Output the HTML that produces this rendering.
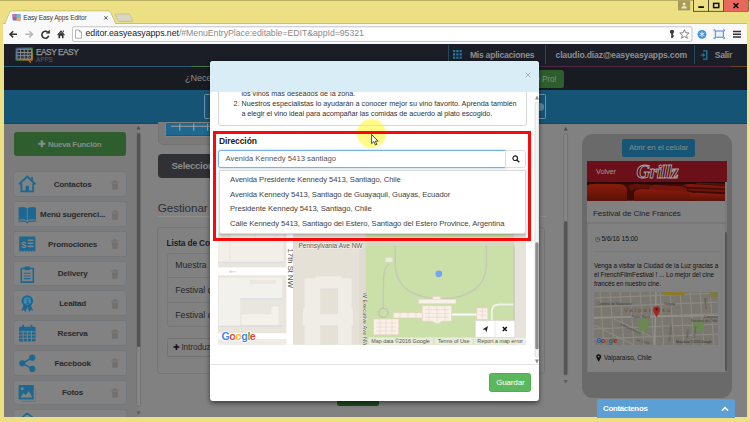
<!DOCTYPE html>
<html><head><meta charset="utf-8"><title>Easy Easy Apps Editor</title>
<style>
*{box-sizing:border-box;margin:0;padding:0}
html,body{width:750px;height:422px;overflow:hidden}
body{background:#ede084;font-family:"Liberation Sans",sans-serif;position:relative;color:#333}
.abs{position:absolute}
.t{position:absolute;white-space:nowrap;line-height:1}
#page{position:absolute;left:3.5px;top:44.1px;width:743.4px;height:373.4px;background:#818181;overflow:hidden}
#page .abs, #page .t{ }
.item{position:absolute;left:9px;width:114.8px;height:25.7px;background:#828282;border:1px solid #72787c;border-radius:3px}
.item .lbl{position:absolute;left:25.6px;width:67px;text-align:center;top:8.6px;font-size:8.1px;line-height:1;font-weight:bold;color:#2a2a2a;white-space:nowrap;letter-spacing:-0.2px}
.item svg.ic{position:absolute;left:4px;top:3px;width:18.6px;height:18.6px}
.item svg.tr{position:absolute;left:97.2px;top:7.5px;width:8px;height:10px}
</style></head><body>
<!-- CHROME -->
<svg class="abs" style="left:0;top:0" width="750" height="45" viewBox="0 0 750 45">
  <rect x="0" y="0" width="750" height=".9" fill="#b3a95f"/><path d="M4.6 24.4 L9.6 12.4 Q10.3 10.9 12.3 10.9 L108 10.9 Q110 10.9 110.7 12.4 L116 24.4 Z" fill="#f9f9f9" stroke="#b5ab62" stroke-width=".6"/>
  <path d="M115.5 14 L128.5 14 Q129.8 14 130.3 15.2 L132.5 20.2 Q133 21.4 131.6 21.4 L119.4 21.4 Q118.2 21.4 117.7 20.2 L115.3 15 Q114.9 14 115.5 14Z" fill="#d8d7c2" stroke="#b9b07a" stroke-width=".6"/>
  <rect x="3.2" y="23.8" width="743.7" height="20.6" rx="1.2" fill="#f9f9f9"/>
  <rect x="3.2" y="23" width="743.7" height=".9" fill="#c6bb6c"/>
  <rect x="5.6" y="22.6" width="109.6" height="1.8" fill="#f9f9f9"/>
  <rect x="72.5" y="26.8" width="619.5" height="14.6" rx="1.5" fill="#fff" stroke="#b4b4b4" stroke-width=".8"/>
  <!-- window buttons -->
  <rect x="678" y=".6" width="12.2" height="9.8" fill="#a69c58"/>
  <circle cx="684.1" cy="4" r="1.5" fill="#ece6b8"/><path d="M681.4 8.6 Q681.4 5.9 684.1 5.9 Q686.8 5.9 686.8 8.6Z" fill="#ece6b8"/>
  <rect x="693.5" y="-1" width="15" height="12.3" fill="#ede084" stroke="#3a3620" stroke-width=".8"/>
  <rect x="708.5" y="-1" width="15" height="12.3" fill="#ede084" stroke="#3a3620" stroke-width=".8"/>
  <rect x="723.5" y="-1" width="25" height="12.3" fill="#e9685d" stroke="#3a3620" stroke-width=".5"/>
  <rect x="698.3" y="6.2" width="5.6" height="1.8" fill="#111"/>
  <rect x="713.6" y="3.4" width="5.2" height="4.2" fill="none" stroke="#111" stroke-width="1.5"/>
  <path d="M733.5 3.3 L738.3 8 M738.3 3.3 L733.5 8" stroke="#111" stroke-width="1.6"/>
  <!-- favicon -->
  <rect x="12.5" y="14" width="8" height="6.5" rx="1" fill="#7a6fd0"/>
  <rect x="12.5" y="14" width="4" height="3" fill="#e06a9a"/><rect x="16.5" y="14" width="4" height="3" fill="#5fc0d8"/><rect x="16.5" y="17.2" width="4" height="3.3" fill="#e8b04a"/>
  <path d="M18 20.4 L20.4 22 L20 20.4Z" fill="#e8934a"/>
  <!-- tab close -->
  <path d="M104.2 16.2 L107.6 19.6 M107.6 16.2 L104.2 19.6" stroke="#444" stroke-width=".9"/>
  <!-- nav icons -->
  <path d="M10 34.3 H17 M13.2 31.2 L10 34.3 L13.2 37.4" stroke="#333" stroke-width="1.5" fill="none"/>
  <path d="M25.5 34.3 H32.5 M29.3 31.2 L32.5 34.3 L29.3 37.4" stroke="#b8b8b8" stroke-width="1.5" fill="none"/>
  <path d="M47.6 32 A3.5 3.5 0 1 0 48.7 35.8" stroke="#2e2e2e" stroke-width="1.6" fill="none"/><path d="M45.8 33.4 L49.9 29.8 L49.9 33.6Z" fill="#2e2e2e"/>
  <path d="M57.2 34.7 L61 30.3 L64.8 34.7 L64.1 35.4 L61 31.9 L57.9 35.4Z M58.5 35 L61 32.4 L63.5 35 V38.2 H61.9 V35.8 H60.1 V38.2 H58.5Z M62.7 30.5 H63.8 V32.6 L62.7 31.4Z" fill="#2e2e2e"/>
  <path d="M75.6 30 H79.4 L81.4 32 V38.2 H75.6Z M79.4 30 V32 H81.4" fill="#fff" stroke="#8a8a8a" stroke-width=".7"/>
  <!-- right icons -->
  <circle cx="672" cy="31.8" r="2.1" fill="#3a3a3a"/><rect x="671.2" y="32.5" width="1.7" height="5.6" fill="#3a3a3a"/><rect x="672" y="35.4" width="2" height="1.2" fill="#3a3a3a"/>
  <path d="M684.4 29.7 L685.7 32.7 L689 33 L686.5 35.1 L687.3 38.3 L684.4 36.6 L681.5 38.3 L682.3 35.1 L679.8 33 L683.1 32.7Z" fill="#fff" stroke="#555" stroke-width=".7"/>
  <circle cx="702" cy="34.3" r="4.4" fill="#3f8fe0"/><path d="M702 31.5 V37.1 M699.6 32.9 L704.4 35.7 M704.4 32.9 L699.6 35.7" stroke="#dfeeff" stroke-width="1"/>
  <rect x="715.3" y="31" width="8" height="6.2" fill="#eaf2fb" stroke="#4a86c8" stroke-width="1"/>
  <path d="M714 31.3 V29.8 H715.6 M723 29.8 H724.6 V31.3 M714 37 V38.6 H715.6 M723 38.6 H724.6 V37" stroke="#4a86c8" stroke-width=".8" fill="none"/>
  <path d="M733 31.6 H741 M733 34.3 H741 M733 37 H741" stroke="#333" stroke-width="1.5"/>
</svg>
<div class="t" style="left:23.2px;top:14.8px;font-size:6.5px;color:#3a3a3a;letter-spacing:-0.12px">Easy Easy Apps Editor</div>
<div class="t" id="url" style="left:85.5px;top:29.4px;font-size:8.78px;color:#222;letter-spacing:-0.05px">editor.easyeasyapps.net<span style="color:#8a8a8a">/#MenuEntryPlace:editable=EDIT&amp;appId=95321</span></div>

<!-- PAGE -->
<div id="page">
  <!-- header -->
  <div class="abs" style="left:0;top:0;width:744px;height:22.4px;background:#1b1e26"></div>
  <div class="abs" style="left:0;top:22px;width:744px;height:1.5px;background:linear-gradient(90deg,#285a78 0,#285a78 187px,#47764a 188px,#47764a 372px,#532844 373px,#532844 726px,#6e4426 727px)"></div>
  <div class="abs" style="left:0;top:23.4px;width:744px;height:23px;background:#181b22"></div>
  <div class="abs" style="left:0;top:46px;width:744px;height:33.6px;background:#165475"></div>
  <div class="abs" style="left:0;top:78.6px;width:744px;height:1.1px;background:#134862"></div>
  <!-- logo -->
  <svg class="abs" style="left:11.5px;top:2.5px" width="19" height="17" viewBox="0 0 19 17">
    <defs><linearGradient id="lg" x1="0" y1="0" x2="1" y2="1"><stop offset="0" stop-color="#53307e"/><stop offset=".3" stop-color="#1d6c8c"/><stop offset=".6" stop-color="#4f7a2a"/><stop offset=".8" stop-color="#98801c"/><stop offset="1" stop-color="#a8601c"/></linearGradient></defs>
    <rect x=".4" y=".4" width="17.6" height="13.4" rx="1.4" fill="url(#lg)"/>
    <path d="M12.6 13.4 L16.2 16.6 L15.8 13.4Z" fill="#a8681f"/>
    <rect x="2" y="2.2" width="14.4" height="9.8" fill="#25252f"/>
    <path d="M2 2.2 H16.4 V12 H2Z M5.6 2.2 V12 M9.2 2.2 V12 M12.8 2.2 V12 M2 5.5 H16.4 M2 8.7 H16.4" stroke="#8d8d90" stroke-width="1" fill="none"/>
    <g><circle cx="3.8" cy="7.1" r=".6" fill="#3a4aa0"/><circle cx="7.4" cy="7.1" r=".6" fill="#2a7aa0"/><circle cx="11" cy="7.1" r=".6" fill="#2a8a5a"/><circle cx="14.6" cy="7.1" r=".6" fill="#8a8a2a"/><circle cx="3.8" cy="10.3" r=".6" fill="#5a3a90"/><circle cx="7.4" cy="10.3" r=".6" fill="#8a2a6a"/><circle cx="11" cy="10.3" r=".6" fill="#a02a2a"/><circle cx="14.6" cy="10.3" r=".6" fill="#a0702a"/></g>
  </svg>
  <div class="t" style="left:32.4px;top:3.6px;font-size:8.4px;color:#9c9c9c;letter-spacing:-0.5px;-webkit-text-stroke:.25px #9c9c9c">EASY EASY</div>
  <div class="t" style="left:32.6px;top:12.6px;font-size:6.4px;color:#5a6068;letter-spacing:-0.1px">APPS</div>
  <!-- header right -->
  <div class="abs" style="left:444px;top:1px;width:1px;height:19px;background:#1d4c63"></div>
  <div class="abs" style="left:541px;top:1px;width:1px;height:19px;background:#1d4c63"></div>
  <div class="abs" style="left:690px;top:1px;width:1px;height:19px;background:#1d4c63"></div>
  <svg class="abs" style="left:449.5px;top:6.3px" width="9" height="9" viewBox="0 0 9 9"><g fill="#1e7aa6"><rect x="0" y="0" width="2.2" height="2.2"/><rect x="3.3" y="0" width="2.2" height="2.2"/><rect x="6.6" y="0" width="2.2" height="2.2"/><rect x="0" y="3.3" width="2.2" height="2.2"/><rect x="3.3" y="3.3" width="2.2" height="2.2"/><rect x="6.6" y="3.3" width="2.2" height="2.2"/><rect x="0" y="6.6" width="2.2" height="2.2"/><rect x="3.3" y="6.6" width="2.2" height="2.2"/><rect x="6.6" y="6.6" width="2.2" height="2.2"/></g></svg>
  <div class="t" id="misap" style="margin-top:.5px;left:466.4px;top:6.4px;font-size:8.6px;font-weight:bold;color:#8e8e8e;letter-spacing:-0.25px">Mis aplicaciones</div>
  <div class="t" id="email" style="margin-top:.5px;left:552px;top:6.4px;font-size:8.6px;font-weight:bold;color:#8e8e8e;letter-spacing:-0.15px">claudio.diaz@easyeasyapps.com</div>
  <svg class="abs" style="left:696.5px;top:5.6px" width="8" height="10" viewBox="0 0 8 10"><path d="M3 .8 H6.8 V9.2 H3" stroke="#1e7aa6" stroke-width="1.3" fill="none"/><path d="M.5 5 H4.2 M2.8 3.4 L4.4 5 L2.8 6.6" stroke="#1e7aa6" stroke-width="1.1" fill="none"/></svg>
  <div class="t" id="salir" style="margin-top:.5px;left:711.2px;top:6.4px;font-size:8.6px;font-weight:bold;color:#8e8e8e;letter-spacing:-0.25px">Salir</div>
  <!-- dark band -->
  <div class="t" style="left:181.4px;top:30.4px;font-size:9.1px;color:#8e8e8e">¿Necesita ayuda?</div>
  <div class="abs" style="left:500px;top:25.8px;width:60.2px;height:18.4px;background:#2e5d2e;border-radius:2.5px"></div>
  <div class="t" style="left:509px;top:30.6px;font-size:8.3px;color:#7f8c7f;letter-spacing:-0.2px">Hágase Pro!</div>
  <!-- blue band wizard box -->
  <div class="abs" style="left:200px;top:50px;width:342.5px;height:24.5px;border:1px solid #6d93a8;border-radius:1.5px"></div>
  <div class="abs" style="left:532px;top:59px;width:8px;height:8px;border-radius:50%;background:#5c8298"></div>

  <!-- sidebar -->
  <div class="abs" style="left:0;top:79.6px;width:134px;height:294px;background:#7b7b7b"></div>
  <div class="abs" style="left:10.3px;top:87.7px;width:112.6px;height:24.4px;background:#2e5d2e;border-radius:3px"></div>
  <div class="t" id="nueva" style="left:34.8px;top:96px;font-size:7.9px;font-weight:bold;color:#878d87;letter-spacing:-0.25px"><span style="font-size:9px;position:relative;top:.3px">✚</span> Nueva Función</div>

  <div class="item" style="top:127.40px"><svg class="ic" viewBox="0 0 18 18"><path d="M1 9 L9 1.5 L17 9 M3.3 8.2 V15.8 H14.7 V8.2 M13.6 2 V5.2" stroke="#1d6890" stroke-width="1.8" fill="none"/><rect x="7.4" y="10.5" width="3.2" height="5.3" fill="#1d6890"/></svg><div class="lbl">Contactos</div><svg class="tr" viewBox="0 0 8 10"><path d="M.3 1.6 H7.7 V2.8 H.3Z M2.8 .3 H5.2 V1.6 H2.8Z M.9 3.4 H7.1 L6.7 9.8 H1.3Z" fill="#717171"/></svg></div>
  <div class="item" style="top:157.15px"><svg class="ic" viewBox="0 0 18 18"><path d="M.6 2.5 Q5 1.2 8.6 3 V14.8 Q5 13.2 .6 14.4Z M17.4 2.5 Q13 1.2 9.4 3 V14.8 Q13 13.2 17.4 14.4Z" fill="#1d6890"/><path d="M.6 15.6 H7 L9 17.2 L11 15.6 H17.4" stroke="#1d6890" stroke-width="1" fill="none"/></svg><div class="lbl">Menú sugerenci...</div><svg class="tr" viewBox="0 0 8 10"><path d="M.3 1.6 H7.7 V2.8 H.3Z M2.8 .3 H5.2 V1.6 H2.8Z M.9 3.4 H7.1 L6.7 9.8 H1.3Z" fill="#717171"/></svg></div>
  <div class="item" style="top:186.90px"><svg class="ic" viewBox="0 0 18 18"><path d="M1.2 1.5 H16.8 V15 L15.5 16.3 L14.2 15 L12.9 16.3 L11.6 15 L10.3 16.3 L9 15 L7.7 16.3 L6.4 15 L5.1 16.3 L3.8 15 L2.5 16.3 L1.2 15Z" fill="#1d6890"/><text x="3" y="12.5" font-family="Liberation Sans, sans-serif" font-size="9.5" font-weight="bold" fill="#828282">$</text><path d="M9.5 5 H15 M9.5 8 H15 M9.5 11 H15" stroke="#828282" stroke-width="1.5"/></svg><div class="lbl">Promociones</div><svg class="tr" viewBox="0 0 8 10"><path d="M.3 1.6 H7.7 V2.8 H.3Z M2.8 .3 H5.2 V1.6 H2.8Z M.9 3.4 H7.1 L6.7 9.8 H1.3Z" fill="#717171"/></svg></div>
  <div class="item" style="top:216.65px"><svg class="ic" viewBox="0 0 18 18"><path d="M3.2 3.4 H14.8 V16.6 H3.2Z" stroke="#1d6890" stroke-width="1.5" fill="none"/><rect x="6.3" y="1.4" width="5.4" height="3.6" rx=".8" fill="#1d6890"/><path d="M5.8 8 H12.2 M5.8 10.6 H12.2 M5.8 13.2 H12.2" stroke="#1d6890" stroke-width="1.1"/></svg><div class="lbl">Delivery</div><svg class="tr" viewBox="0 0 8 10"><path d="M.3 1.6 H7.7 V2.8 H.3Z M2.8 .3 H5.2 V1.6 H2.8Z M.9 3.4 H7.1 L6.7 9.8 H1.3Z" fill="#717171"/></svg></div>
  <div class="item" style="top:246.40px"><svg class="ic" viewBox="0 0 18 18"><path d="M5.6 10.5 L3.2 16.4 L5.8 15.6 L7.2 17.6 L9 12.5 L10.8 17.6 L12.2 15.6 L14.8 16.4 L12.4 10.5Z" fill="#1d6890"/><circle cx="9" cy="6.8" r="5.6" fill="#1d6890"/><circle cx="9" cy="6.8" r="3.6" fill="#3d86ad"/><text x="7.4" y="9.2" font-family="Liberation Sans, sans-serif" font-size="6.5" font-weight="bold" fill="#1d6890">1</text></svg><div class="lbl">Lealtad</div><svg class="tr" viewBox="0 0 8 10"><path d="M.3 1.6 H7.7 V2.8 H.3Z M2.8 .3 H5.2 V1.6 H2.8Z M.9 3.4 H7.1 L6.7 9.8 H1.3Z" fill="#717171"/></svg></div>
  <div class="item" style="top:276.15px"><svg class="ic" viewBox="0 0 18 18"><rect x="1" y="2.6" width="16" height="14.4" rx="1" fill="#1d6890"/><rect x="4" y=".8" width="1.8" height="3.6" fill="#1d6890"/><rect x="12.2" y=".8" width="1.8" height="3.6" fill="#1d6890"/><path d="M1 7.6 H17 M1 10.7 H17 M1 13.8 H17 M5 6.4 V17 M9 6.4 V17 M13 6.4 V17" stroke="#828282" stroke-width=".9"/></svg><div class="lbl">Reserva</div><svg class="tr" viewBox="0 0 8 10"><path d="M.3 1.6 H7.7 V2.8 H.3Z M2.8 .3 H5.2 V1.6 H2.8Z M.9 3.4 H7.1 L6.7 9.8 H1.3Z" fill="#717171"/></svg></div>
  <div class="item" style="top:305.90px"><svg class="ic" viewBox="0 0 18 18"><path d="M13.6 3.6 L4.4 9 L13.6 14.4" stroke="#1d6890" stroke-width="1.5" fill="none"/><circle cx="13.8" cy="3.6" r="3" fill="#1d6890"/><circle cx="4.2" cy="9" r="3" fill="#1d6890"/><circle cx="13.8" cy="14.4" r="3" fill="#1d6890"/></svg><div class="lbl">Facebook</div><svg class="tr" viewBox="0 0 8 10"><path d="M.3 1.6 H7.7 V2.8 H.3Z M2.8 .3 H5.2 V1.6 H2.8Z M.9 3.4 H7.1 L6.7 9.8 H1.3Z" fill="#717171"/></svg></div>
  <div class="item" style="top:335.65px"><svg class="ic" viewBox="0 0 18 18"><path d="M3 16.8 H17.4 V4" stroke="#3d86ad" stroke-width="1.4" fill="none"/><rect x=".6" y="1" width="14.6" height="14" fill="#1d6890"/><path d="M2.2 13 L5.4 8.6 L7.4 10.8 L10.2 6.8 L13.8 13Z" fill="#828282"/><circle cx="4" cy="4.6" r="1.4" fill="#828282"/></svg><div class="lbl">Fotos</div><svg class="tr" viewBox="0 0 8 10"><path d="M.3 1.6 H7.7 V2.8 H.3Z M2.8 .3 H5.2 V1.6 H2.8Z M.9 3.4 H7.1 L6.7 9.8 H1.3Z" fill="#717171"/></svg></div>
  <div class="item" style="top:365.40px"><svg class="ic" viewBox="0 0 18 18"><path d="M4 4.2 L9 .2 L14 4.2" stroke="#1d6890" stroke-width="1.6" fill="none"/></svg></div>

  <!-- sidebar scrollbar -->
  <svg class="abs" style="left:131.6px;top:79px" width="8" height="296" viewBox="0 0 8 296">
    <path d="M3.6 3 L5.6 6.6 H1.6Z" fill="#4a4a4a"/>
    <rect x="1.7" y="9.5" width="3.8" height="274" rx="1.9" fill="#878787" stroke="#6d6d6d" stroke-width=".7"/>
    <rect x="2" y="10" width="3.2" height="214" rx="1.6" fill="#535353"/>
    <path d="M3.6 292 L5.6 288.4 H1.6Z" fill="#5a5a5a"/>
  </svg>

  <!-- center column -->
  <div class="abs" style="left:154.5px;top:78px;width:372px;height:22.6px;border:1px solid #747474;border-top:none;border-radius:0 0 5.5px 5.5px;background:#7a7a7a"></div>
  <div class="abs" style="left:162.5px;top:78.6px;width:360px;height:13.2px;background:#1f6891;box-shadow:0 0 0 .6px #8f8985"></div>
  <div class="abs" style="left:162.5px;top:90.8px;width:360px;height:1.2px;background:#195a80"></div>
  <svg class="abs" style="left:166px;top:78px" width="50" height="12" viewBox="0 0 50 12"><path d="M1 4.3 H50 M9.8 1.6 V8.8 M23.7 1.6 V8.8 M37.6 1.6 V8.8" stroke="#a59e99" stroke-width="1.1"/></svg>

  <div class="abs" style="left:154.8px;top:109.8px;width:120px;height:24px;background:#2f3134;border-radius:4px"></div>
  <div class="t" id="selec" style="left:168px;top:117.3px;font-size:9.6px;font-weight:bold;color:#8b8b8b;letter-spacing:-0.3px">Seleccionar</div>
  <div class="t" id="gest" style="left:154.3px;top:157.6px;font-size:11.7px;color:#2b2f34;letter-spacing:-0.1px">Gestionar contenido</div>
  <div class="abs" style="left:154.5px;top:171.5px;width:388px;height:1px;background:#8d8d8d"></div>
  <div class="abs" style="left:153.8px;top:183.4px;width:388px;height:146.4px;background:#818181;border:1px solid #757575;border-radius:3.5px"></div>
  <div class="t" style="left:163px;top:195px;font-size:8.4px;font-weight:bold;color:#1d1d1d;letter-spacing:-0.15px">Lista de Contenidos</div>
  <div class="abs" style="left:163.2px;top:208.6px;width:370px;height:74.2px;background:#818181;border:1px solid #777;border-radius:3px"></div>
  <div class="abs" style="left:163.2px;top:233.1px;width:370px;height:1px;background:#767676"></div>
  <div class="abs" style="left:163.2px;top:257.7px;width:370px;height:1px;background:#767676"></div>
  <div class="t" style="left:171.8px;top:217.2px;font-size:8.7px;color:#262626">Muestra</div>
  <div class="t" style="left:171.8px;top:241.9px;font-size:8.7px;color:#262626">Festival de</div>
  <div class="t" style="left:171.8px;top:266.5px;font-size:8.7px;color:#262626">Festival de</div>
  <div class="abs" style="left:163.2px;top:294.2px;width:90px;height:18.4px;background:#818181;border:1px solid #727272;border-radius:2.5px"></div>
  <div class="t" style="left:169.8px;top:298.6px;font-size:8.3px;color:#2a2a2a;letter-spacing:-.1px"><span style="font-size:8px;color:#111;margin-right:1.2px">✚</span>Introduzca</div>
  <div class="abs" style="left:333.5px;top:350px;width:42.3px;height:12.4px;background:#1f4a20;border-radius:0 0 2.5px 2.5px"></div>

  <!-- middle scrollbar -->
  <svg class="abs" style="left:558px;top:80px" width="8" height="262" viewBox="0 0 8 262">
    <path d="M3.7 3 L5.7 6.6 H1.7Z" fill="#4a4a4a"/>
    <rect x="1.8" y="9.5" width="3.8" height="242" rx="1.9" fill="#878787" stroke="#6d6d6d" stroke-width=".7"/>
    <rect x="2.1" y="97.1" width="3.2" height="153.8" rx="1.6" fill="#535353"/>
    <path d="M3.7 259.5 L5.7 255.9 H1.7Z" fill="#5a5a5a"/>
  </svg>

  <!-- phone -->
  <div class="abs" style="left:578.5px;top:90px;width:149.5px;height:263.6px;background:#6a6a6a;border-radius:11px"></div>
  <div class="abs" style="left:618.2px;top:94.5px;width:73.6px;height:18.4px;background:#165576;border-radius:2.5px"></div>
  <div class="t" id="abrir" style="left:625.4px;top:100.4px;font-size:7.85px;color:#868d90;letter-spacing:-0.1px">Abrir en el celular</div>
  <div class="abs" style="left:583.3px;top:116.5px;width:140.4px;height:211.6px;background:#787878"></div>
  <div class="abs" style="left:583.3px;top:116.5px;width:140.4px;height:22px;background:#6b1019"></div>
  <div class="t" style="left:592.5px;top:123.7px;font-size:7.3px;color:#a59b9c;letter-spacing:-0.05px">Volver</div>
  <svg class="abs" style="left:630px;top:116.5px" width="50" height="22" viewBox="0 0 50 22"><text id="grillz" x="2.6" y="16.6" font-family="Liberation Serif, serif" font-style="italic" font-weight="bold" font-size="18.6" letter-spacing="-.3" fill="#4a0a11" stroke="#a89e9f" stroke-width=".95">Grillz</text></svg>
  <!-- seats -->
  <svg class="abs" style="left:583.3px;top:138.3px" width="138" height="18.7" viewBox="0 0 138 18.4" preserveAspectRatio="none">
    <defs><linearGradient id="sg" x1="0" y1="0" x2="0" y2="1"><stop offset="0" stop-color="#8a1c0c"/><stop offset="1" stop-color="#5c1108"/></linearGradient></defs>
    <rect width="138" height="18.4" fill="#3c0a07"/>
    <rect width="138" height="1.6" fill="#220504"/>
    <path d="M0 18.4 V3.6 Q2 1.6 8 1.6 L32 2 Q39 2.6 40 7 V18.4Z" fill="url(#sg)"/>
    <path d="M62 4.8 Q64 2.6 70 2.8 L94 4.2 Q100 5 100.4 8.6 V12 L62 9Z" fill="#74160b"/>
    <path d="M96 3.4 Q99 1.6 105 2 L138 4 V6.4 L100 5Z" fill="#7a180c"/>
    <path d="M100 6.4 L138 7.6 V10 L102 8.6Z" fill="#6a140a"/>
    <path d="M110 .6 L138 1.8 V3 L108 1.8Z" fill="#5e1209"/>
    <path d="M47 18.4 V10.4 Q48 6.6 56 6.8 L100 9.4 Q108.4 10.2 109 14 V18.4Z" fill="url(#sg)"/>
    <path d="M102 18.4 V13 Q103.4 10.4 110 10.6 L138 12 V18.4Z" fill="url(#sg)"/>
    <path d="M41 4 Q44 1.6 50 2 L66 3 L60 6.4 L50 6.6 Q46 6.8 44.6 9Z" fill="#5e1209"/>
  </svg>
  <div class="abs" style="left:721.3px;top:138px;width:2.4px;height:189.5px;background:#7a7a7a"></div>
  <div class="abs" style="left:721.6px;top:188px;width:1.9px;height:139px;background:#565656;border-radius:1px"></div>
  <div class="abs" style="left:583.3px;top:157px;width:138px;height:21px;background:#818181"></div>
  <div class="t" id="festt" style="left:589.5px;top:166.2px;font-size:8.05px;color:#1f1f1f;letter-spacing:-0.05px">Festival de Cine Francés</div>
  <div class="abs" style="left:584px;top:179.6px;width:137.3px;height:148.5px;background:#818181;border-radius:2px 2px 0 0"></div>
  <div class="t" style="left:591.2px;top:191.6px;font-size:6.7px;color:#141414;letter-spacing:-0.05px"><span style="font-size:6.4px">◷</span> 5/6/16 15:00</div>
  <div class="abs" style="left:590px;top:206.5px;width:126px;height:1px;background:#797979"></div>
  <div class="t" style="left:590.4px;top:217.6px;font-size:6.35px;color:#111;line-height:8.95px;letter-spacing:-0.02px">Venga a visitar la Ciudad de la Luz gracias a<br>el FrenchFilmFestival ! ... Lo mejor del cine<br>francés en nuestro cine.</div>
  <!-- small map -->
  <svg class="abs" style="left:590px;top:247.6px" width="124.6" height="53" viewBox="0 0 124.6 53">
    <rect width="124.6" height="53" fill="#7a7770"/>
    <g stroke="#8c8982" stroke-width="1.1" fill="none">
      <path d="M-4 -2 L0.0 55 M6 -2 L10.0 55 M16 -2 L20.0 55 M26 -2 L30.0 55 M36 -2 L40.0 55 M46 -2 L50.0 55 M56 -2 L60.0 55 M66 -2 L70.0 55 M76 -2 L80.0 55 M86 -2 L90.0 55 M96 -2 L100.0 55 M106 -2 L110.0 55 M116 -2 L120.0 55 M126 -2 L130.0 55 M-2 6.0 L127 1.0 M-2 15.0 L127 10.0 M-2 26.5 L127 21.5 M-2 37.0 L127 32.0 M-2 47.0 L127 42.0 M20 27 L62 47 M0 33 L40 53"/>
    </g>
    <g stroke="#93908a" stroke-width="1.5" fill="none"><path d="M0 25.6 L127 23.4 M62 -2 L60.6 55"/></g>
    <rect x="44.5" y="26.6" width="10.2" height="12" fill="#6c8852"/>
    <rect x="99.6" y="29" width="10.4" height="10.8" fill="#6c8852"/>
    <path d="M68 0 H92 L90 3 H70Z" fill="#8a7a2a"/>
    <path d="M115 0 H124 V5 L117 6Z" fill="#7d7a40"/>
    <text x="30" y="20.5" font-family="Liberation Sans, sans-serif" font-size="6.2" fill="#6a4f3c" letter-spacing="1.9">Valparaíso</text>
    <text x="3.5" y="12.6" font-family="Liberation Sans, sans-serif" font-size="3.4" fill="#3f3c38">Catedral de Valparaíso</text>
    <text x="70" y="12.6" font-family="Liberation Sans, sans-serif" font-size="3.4" fill="#3f3c38">Yungay</text>
    <text x="37.5" y="26.4" font-family="Liberation Sans, sans-serif" font-size="3.4" fill="#3f3c38">Pedro Montt</text>
    <text x="110" y="26" font-family="Liberation Sans, sans-serif" font-size="3.4" fill="#3f3c38">Congreso</text>
    <text x="97" y="30.4" font-family="Liberation Sans, sans-serif" font-size="3.4" fill="#3f3c38">Nacional de Chile</text>
    <text x="26" y="33" font-family="Liberation Sans, sans-serif" font-size="3.4" fill="#4a4742" transform="rotate(24 26 33)">Independencia</text>
    <text x="42" y="49" font-family="Liberation Sans, sans-serif" font-size="3.4" fill="#4a4742" transform="rotate(14 42 49)">Av. Colón</text>
    <text x="76" y="50" font-family="Liberation Sans, sans-serif" font-size="3.2" fill="#4a4742" transform="rotate(-84 76 50)">San Ignacio</text>
    <text x="94" y="46" font-family="Liberation Sans, sans-serif" font-size="3.2" fill="#4a4742" transform="rotate(-84 94 46)">Morris</text>
    <text x="101" y="46" font-family="Liberation Sans, sans-serif" font-size="3.2" fill="#4a4742" transform="rotate(-84 101 46)">Uruguay</text>
    <text x="110" y="6" font-family="Liberation Sans, sans-serif" font-size="3.2" fill="#4a4742" transform="rotate(84 110 6)">Rawson</text>
    <text x="82" y="51.2" font-family="Liberation Sans, sans-serif" font-size="3.3" fill="#2f2d2a">Map data ©2016 Google</text>
    <text x="2.2" y="50.8" font-family="Liberation Sans, sans-serif" font-size="6.6" font-weight="bold" letter-spacing="-.3"><tspan fill="#2a5aa8">G</tspan><tspan fill="#8a2a22">o</tspan><tspan fill="#8a7216">o</tspan><tspan fill="#2a5aa8">g</tspan><tspan fill="#2a7a3a">l</tspan><tspan fill="#8a2a22">e</tspan></text>
    <path d="M62.6 25.4 Q59.2 19.6 59.2 17.6 A3.4 3.4 0 0 1 66 17.6 Q66 19.6 62.6 25.4Z" fill="#a3261f"/><circle cx="62.6" cy="17.4" r="1.1" fill="#4e0d0a"/>
  </svg>
  <svg class="abs" style="left:592.8px;top:310.2px" width="5.4" height="8" viewBox="0 0 6 9"><path d="M3 8.6 Q.2 4.4 .2 3 A2.8 2.8 0 0 1 5.8 3 Q5.8 4.4 3 8.6Z" fill="#111"/><circle cx="3" cy="2.9" r="1" fill="#818181"/></svg>
  <div class="t" style="left:600.6px;top:311.4px;font-size:6.35px;color:#151515;letter-spacing:-.02px">Valparaíso, Chile</div>
</div>

<!-- CONTACT bar (not dimmed) -->
<div class="abs" style="left:597.4px;top:399.4px;width:138px;height:18.2px;background:#5b9fd5;border-radius:3px 3px 0 0"></div>
<div class="t" id="contact" style="left:603px;top:404.6px;font-size:7.9px;font-weight:bold;color:#fff;letter-spacing:-0.3px">Contáctenos</div>
<svg class="abs" style="left:721px;top:405.5px" width="8" height="6" viewBox="0 0 8 6"><path d="M1 4.8 L4 1.6 L7 4.8" stroke="#fff" stroke-width="1.4" fill="none"/></svg>

<!-- MODAL -->
<div class="abs" id="modal" style="left:210.2px;top:61.2px;width:329px;height:339.6px;background:#fff;border-radius:3px;box-shadow:0 1.5px 5px rgba(0,0,0,.55);overflow:hidden">
  <!-- body content -->
  <div class="abs" style="left:8px;top:20px;width:308.6px;height:44.6px;border:1px solid #d6d6d6;border-radius:3px;background:#fff"></div>
  <div class="t" style="left:31.2px;top:29.2px;font-size:7.2px;color:#333">los vinos más deseados de la zona.</div>
  <div class="t" id="p1" style="left:23.2px;top:38.9px;font-size:7.25px;color:#333;letter-spacing:-.01px">2. Nuestros especialistas lo ayudarán a conocer mejor su vino favorito. Aprenda también</div>
  <div class="t" id="p2" style="left:31.2px;top:48.7px;font-size:7.25px;color:#333;letter-spacing:-.065px">a elegir el vino ideal para acompañar las comidas de acuerdo al plato escogido.</div>
  <div class="abs" style="left:0;top:0;width:329px;height:30.6px;background:#d9edf7;border-radius:3px 3px 0 0"></div>
  <svg class="abs" style="left:314.6px;top:10.6px" width="6" height="6" viewBox="0 0 6 6"><path d="M.6 .6 L5.4 5.4 M5.4 .6 L.6 5.4" stroke="#9fb0ba" stroke-width=".9"/></svg>

  <!-- map -->
  <svg class="abs" style="left:8.2px;top:172px" width="308" height="111.6" viewBox="0 0 308 111.6">
    <rect width="308" height="111.6" fill="#e8e4da"/>
    <!-- left upper block -->
    <rect x="0" y="0" width="68.6" height="34.4" fill="#e9e5dc"/>
    <path d="M12 0 H65.6 V29.2 H0 V8 H12Z" fill="#f2efe9"/>
    <path d="M0 29.2 H65.6" stroke="#cfd3e0" stroke-width=".7"/>
    <path d="M12 0 V27 M38 0 L36 8 M60 0 L56 6" stroke="#e2ded4" stroke-width=".6" fill="none"/>
    <rect x="0" y="34.4" width="68.6" height="8.2" fill="#fff"/>
    <path d="M11.6 38.8 H17.6 M13.4 37.4 L11.6 38.8 L13.4 40.2" stroke="#b9b9b9" stroke-width=".6" fill="none"/>
    <!-- left lower block -->
    <rect x="0" y="42.6" width="68.6" height="57.6" fill="#e9e5dc"/>
    <path d="M.6 44.6 H64.4 V93.2 H.6Z" fill="#f3f1ec"/>
    <path d="M22.2 65.8 H64.4 V93.2 H22.2Z" fill="#e9e6df"/>
    <path d="M22.2 65.8 H64.4 M.6 93.2 H64.4" stroke="#cfd3e0" stroke-width=".7"/>
    <path d="M23.6 81.6 H53.4 V73.4 H60.6 V91.8 H23.6Z" fill="#f3f1ec"/>
    <path d="M32 47 H58 V51 H32Z" fill="#ebe8e1"/>
    <rect x="0" y="100.2" width="68.6" height="5.8" fill="#fff"/>
    <rect x="0" y="106" width="68.6" height="5.6" fill="#efece6"/>
    <!-- 17th st -->
    <rect x="68.4" y="0" width="6.6" height="111.6" fill="#fff"/>
    <!-- middle block -->
    <rect x="75" y="0" width="72.6" height="111.6" fill="#e5e1d6"/>
    <rect x="75" y="7.6" width="233" height="7.6" fill="#e1ddd3"/>
    <rect x="141.2" y="15" width="6.4" height="96.6" fill="#dedbd2"/>
    <path d="M86.7 45.3 H97.6 V43.2 H123.3 V45.3 H133.6 V75.2 H134.8 V93.1 H133.6 V111.6 H86.7 V93.1 H84.9 V75.2 H86.7Z" fill="#f0ede7"/>
    <rect x="102.1" y="56" width="17.9" height="25.1" fill="#e5e1d6"/><rect x="102.1" y="93.1" width="17.9" height="18.5" fill="#e5e1d6"/>
    <path d="M102.1 56 H120 M102.1 93.1 H120" stroke="#d3d5de" stroke-width=".6"/>
    <!-- park -->
    <rect x="147.6" y="0" width="148.6" height="111.6" fill="#cbdfa9"/>
    <rect x="147.6" y="9.2" width="160.4" height="3.6" fill="#d6d7c9"/>
    <rect x="296.2" y="0" width="11.8" height="111.6" fill="#e6e3da"/>
    <rect x="295.4" y="12.6" width="1.3" height="99" fill="#c6c7bb"/>
    <path d="M177.2 12.6 V33 Q179 64.4 222.8 66 Q266.6 64.4 268.4 33 V12.6" stroke="#c6c9b6" stroke-width="1.5" fill="none"/>
    <path d="M171.6 31.4 Q166 33 165.6 44 L165.2 75" stroke="#c6c9b6" stroke-width="1.3" fill="none"/>
    <circle cx="165.3" cy="79.8" r="4.6" stroke="#bfc2b2" stroke-width="1.3" fill="none"/>
    <rect x="167.6" y="24.6" width="7" height="4.4" fill="#eceadf"/>
    <path d="M218 9.2 V0 M227.6 9.2 V0" stroke="#d4d6c6" stroke-width="1"/>
    <path d="M273.8 111.6 V78.6 Q273.8 71.4 281 71.4 H295.4" stroke="#f0f1e8" stroke-width="2" fill="none"/>
    <path d="M204 111.6 Q219.4 100 235.4 111.6" stroke="#c6c9b6" stroke-width="1.2" fill="none"/>
    <path d="M175.2 82.6 H261" stroke="#f3f4ec" stroke-width="1"/>
    <!-- white house -->
    <g fill="#f8f1ea" stroke="#ead0c1" stroke-width=".6">
      <rect x="214.8" y="63.6" width="7.8" height="4.2"/>
      <rect x="200.4" y="66.2" width="37.6" height="4.6"/>
      <path d="M204.2 72.8 H233.6 V88.2 H224 Q219.2 92.6 214.4 88.2 H204.2Z"/>
      <rect x="175.2" y="79.8" width="29" height="5.2"/>
      <rect x="233.6" y="80.2" width="27.4" height="2.6" fill="#fdfdfa"/>
      <rect x="258.8" y="75" width="11" height="11.4"/>
      <rect x="155.4" y="86" width="25.4" height="15.8"/>
    </g>
    <g stroke="#e8cbbb" stroke-width=".5" fill="none"><path d="M207 76.6 H231 M207 80.4 H231 M207 84.2 H231 M211 72.8 V88.2 M219 72.8 V88.2 M227 72.8 V88.2 M158 90 H178 M158 94 H178 M158 98 H178 M162 86 V101.8 M168 86 V101.8 M174 86 V101.8 M261 78 H268 M261 82 H268 M264.4 75 V86.4 M182 79.8 V85 M190 79.8 V85 M198 79.8 V85"/></g>
    <circle cx="220.8" cy="40.8" r="3.4" fill="#76a3f3"/>
    <!-- labels -->
    <text id="penn" x="80.4" y="15" font-family="Liberation Sans, sans-serif" font-size="6.55" fill="#5a5750" stroke="#f1eee7" stroke-width="1.4" paint-order="stroke" letter-spacing="0">Pennsylvania Ave NW</text>
    <text x="0" y="0" font-family="Liberation Sans, sans-serif" font-size="7.7" fill="#5a5750" stroke="#fff" stroke-width=".8" paint-order="stroke" transform="translate(69.6 15.6) rotate(90)">17th St NW</text>
    <text x="0" y="0" font-family="Liberation Sans, sans-serif" font-size="5.75" fill="#56534c" stroke="#e8ead8" stroke-width="1" paint-order="stroke" transform="translate(145.4 59.4) rotate(90)">W Executive Ave NW</text>
    <!-- google logo -->
    <text id="glogo" x="3.4" y="107.2" font-family="Liberation Sans, sans-serif" font-size="10.8" letter-spacing="-.55" stroke="#fff" stroke-width="1.5" paint-order="stroke" font-weight="bold"><tspan fill="#4285f4">G</tspan><tspan fill="#ea4335">o</tspan><tspan fill="#fbbc05">o</tspan><tspan fill="#4285f4">g</tspan><tspan fill="#34a853">l</tspan><tspan fill="#ea4335">e</tspan></text>
    <!-- attribution -->
    <rect x="150.4" y="104.4" width="157.6" height="7.2" fill="#f3f1ea" opacity=".75"/>
    <text id="at1" x="153.2" y="109.8" font-family="Liberation Sans, sans-serif" font-size="5.4" fill="#555">Map data ©2016 Google</text>
    <text id="at2" x="219.9" y="109.8" font-family="Liberation Sans, sans-serif" font-size="5.4" fill="#555">Terms of Use</text>
    <text id="at3" x="259.3" y="109.8" font-family="Liberation Sans, sans-serif" font-size="5.4" fill="#555">Report a map error</text>
    <path d="M215.8 104.6 V111.6 M255.4 104.6 V111.6" stroke="#cfcdc5" stroke-width=".6"/>
    <!-- buttons -->
    <rect x="257.3" y="87.5" width="39.6" height="16.9" rx="1" fill="#fff" stroke="#d4d4d0" stroke-width=".6"/>
    <path d="M277.1 87.5 V104.4" stroke="#dcdcdc" stroke-width=".6"/>
    <path d="M264.4 96.6 L270 93 L268.4 99.4 L267.4 96.8Z" fill="#222"/>
    <path d="M284.8 94 L288.8 98 M288.8 94 L284.8 98" stroke="#111" stroke-width="1.5"/>
  </svg>

  <div class="abs" style="left:146.1px;top:56.9px;width:30.8px;height:30.8px;border-radius:50%;background:radial-gradient(circle closest-side,rgba(255,249,40,.56) 0,rgba(255,249,40,.56) 88%,rgba(255,249,40,0) 100%)"></div>
  <!-- red box -->
  <div class="abs" style="left:2.5px;top:70.3px;width:318.4px;height:109.6px;border:3px solid #f60a0a"></div>
  <div class="t" id="direc" style="left:8.8px;top:75.5px;font-size:8.5px;font-weight:bold;color:#222;letter-spacing:-0.1px">Dirección</div>
  <div class="abs" style="left:7.8px;top:88.4px;width:287.6px;height:18.8px;background:#fff;border:1px solid #74b4e6;border-radius:2.5px 0 0 2.5px;box-shadow:0 0 2.5px rgba(102,175,233,.7)"></div>
  <div class="abs" style="left:295px;top:88.4px;width:21.2px;height:18.8px;background:#fff;border:1px solid #dedede;border-radius:0 2.5px 2.5px 0"></div>
  <svg class="abs" style="left:301.6px;top:94px" width="8" height="8" viewBox="0 0 8 8"><circle cx="3.2" cy="3.2" r="2.3" stroke="#222" stroke-width="1.2" fill="none"/><path d="M4.9 4.9 L7.3 7.3" stroke="#222" stroke-width="1.4"/></svg>
  <div class="t" id="inp" style="left:15.4px;top:94.2px;font-size:7.7px;color:#555;letter-spacing:0">Avenida Kennedy 5413 santiago</div>
  <!-- dropdown -->
  <div class="abs" style="left:8.6px;top:109.2px;width:307.6px;height:63.4px;background:#fff;border:1px solid #dadada;border-radius:0 0 2.5px 2.5px;box-shadow:0 1.5px 3px rgba(0,0,0,.22)"></div>
  <div class="t" id="dd1" style="left:19.8px;top:111.8px;font-size:7.7px;color:#444;line-height:14.6px;letter-spacing:-0.08px">Avenida Presidente Kennedy 5413, Santiago, Chile<br>Avenida Kennedy 5413, Santiago de Guayaquil, Guayas, Ecuador<br>Presidente Kennedy 5413, Santiago, Chile<br>Calle Kennedy 5413, Santiago del Estero, Santiago del Estero Province, Argentina</div>

  <!-- scrollbar -->
  <svg class="abs" style="left:323.6px;top:30px" width="6" height="276" viewBox="0 0 6 276">
    <path d="M3 4.6 L5 8.4 H1Z" fill="#8a8a8a"/>
    <rect x="1" y="11" width="3.6" height="255" rx="1.8" fill="#f4f4f4" stroke="#cfcfcf" stroke-width=".6"/>
    <rect x="1.3" y="151.3" width="3.3" height="107" rx="1.6" fill="#8c8c8c"/>
    <path d="M3 272.4 L5 268.6 H1Z" fill="#8a8a8a"/>
  </svg>

  <!-- cursor highlight -->
  
  <svg class="abs" style="left:161px;top:72.5px" width="8" height="12" viewBox="0 0 8 12"><path d="M.6 .6 V9.6 L2.8 7.6 L4.4 11 L5.8 10.4 L4.3 7.1 H7.2Z" fill="#fff" stroke="#222" stroke-width=".8"/></svg>

  <!-- footer -->
  <div class="abs" style="left:0;top:302.6px;width:329px;height:1px;background:#e5e5e5"></div>
  <div class="abs" style="left:278.8px;top:312px;width:42.4px;height:19px;background:#5cb85c;border:1px solid #4cae4c;border-radius:2.5px"></div>
  <div class="t" id="guardar" style="left:286px;top:317.5px;font-size:8px;color:#fff;letter-spacing:-0.15px">Guardar</div>
</div>
</body></html>
